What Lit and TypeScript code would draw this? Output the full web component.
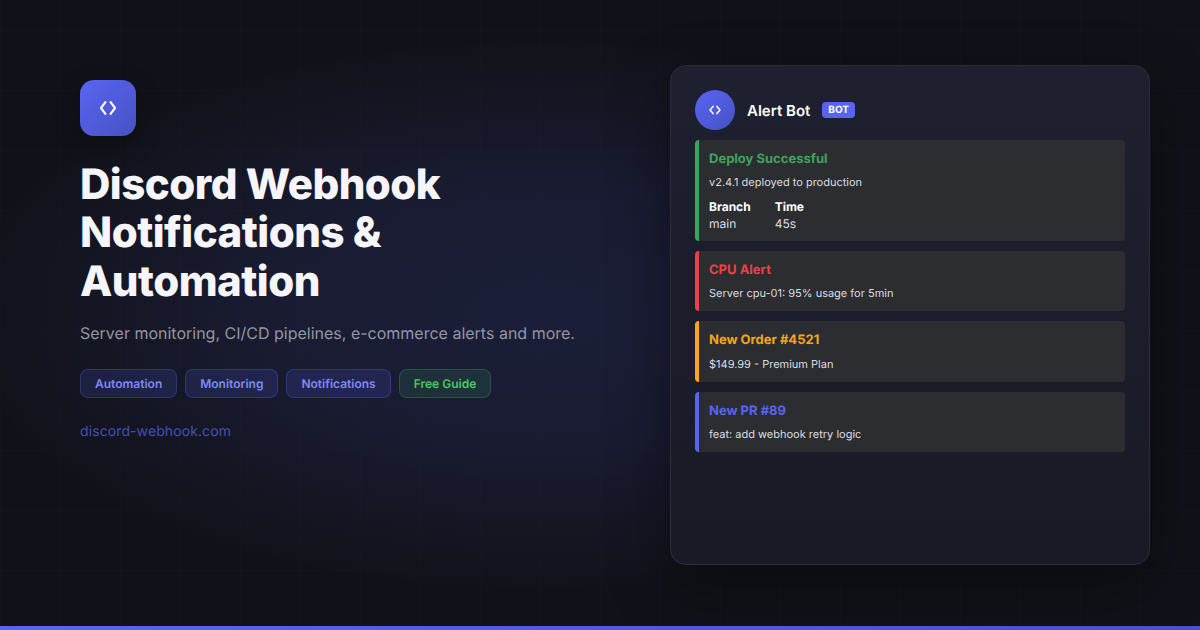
import { LitElement, html, css, svg } from "lit";
import { customElement } from "lit/decorators.js";

const code = (tip: number, end: number, h: number, sw: number) => html`<svg width="24" height="24" viewBox="-12 -12 24 24" fill="none" stroke="#fff" stroke-width=${sw} stroke-linecap="round" stroke-linejoin="round">${svg`<path d="M${-end} ${-h}L${-tip} 0L${-end} ${h}"/><path d="M${end} ${-h}L${tip} 0L${end} ${h}"/>`}</svg>`;

@customElement("app-root")
export class AppRoot extends LitElement {
  static styles = css`
    :host { display: block; width: 1200px; height: 630px; font-family: Inter, "Liberation Sans", sans-serif; color: #fff; overflow: hidden; text-rendering: geometricPrecision; }
    .page { position: relative; box-sizing: border-box; width: 1200px; height: 630px; display: flex; justify-content: space-between; padding: 65px 50px 0 80px;
      background:
        linear-gradient(rgba(88,101,242,.018) 1px, transparent 1px) 0 30px / 60px 60px,
        linear-gradient(90deg, rgba(88,101,242,.018) 1px, transparent 1px) 0 0 / 60px 60px,
        radial-gradient(ellipse at 45% 50%, rgba(88,101,242,.15) 0%, rgba(88,101,242,.11) 30%, rgba(88,101,242,0) 62%),
        #111219; }
    .bar { position: absolute; left: 0; right: 0; bottom: 0; height: 4px; background: linear-gradient(90deg, #5865f2, #4752c4); }
    .left { padding-top: 15px; width: 520px; }
    .logo { width: 56px; height: 56px; border-radius: 14px; background: linear-gradient(135deg, #5865f2, #4752c4); display: flex; align-items: center; justify-content: center; box-shadow: 0 8px 24px rgba(0,0,0,.3); margin-bottom: 25px; }
    h1 { margin: 0 0 14.5px; font-size: 42px; line-height: 48.3px; font-weight: 800; color: #f5f5fa; letter-spacing: -.5px; }
    .sub { font-size: 16px; line-height: 26px; color: #9496a1; margin-bottom: 23px; }
    .tags { display: flex; gap: 8px; margin-bottom: 23.5px; }
    .tag { box-sizing: border-box; height: 29px; padding: 0 14px; display: flex; align-items: center; font-size: 12px; font-weight: 600; border-radius: 8px; background: rgba(88,101,242,.15); border: 1px solid rgba(88,101,242,.3); color: #7f89f7; }
    .tag.green { background: rgba(59,165,93,.15); border-color: rgba(59,165,93,.3); color: #4ac85f; }
    .url { font-size: 14px; line-height: 20px; color: #4650b4; letter-spacing: .1px; }
    .card { box-sizing: border-box; width: 480px; height: 500px; background: linear-gradient(180deg, #1e2030, #1a1a26); border: 1px solid #2c2d3c; border-radius: 16px; padding: 24px; box-shadow: 0 20px 60px rgba(0,0,0,.4); }
    .head { display: flex; align-items: center; margin-bottom: 10px; height: 40px; }
    .avatar { width: 40px; height: 40px; border-radius: 50%; background: linear-gradient(135deg, #5865f2, #4752c4); display: flex; align-items: center; justify-content: center; margin-right: 12px; }
    .name { font-size: 15px; font-weight: 600; margin-right: 12px; }
    .badge { background: #5865f2; border-radius: 4px; font-size: 10px; font-weight: 700; line-height: 16px; padding: 0 6px; }
    .embeds { display: flex; flex-direction: column; gap: 10px; }
    .embed { background: #2b2d31; border-left: 4px solid; border-radius: 4px; padding: 10px; }
    .t { font-size: 13px; font-weight: 700; line-height: 18px; margin-bottom: 6.4px; }
    .d { font-size: 11px; line-height: 16px; color: #dbdee1; }
    .fields { display: flex; gap: 24px; margin: 8.5px 0 -1.5px; font-size: 12px; }
    .fields b { display: block; font-weight: 700; line-height: 16.4px; margin-bottom: 1px; color: #fff; }
    .fields span { display: block; line-height: 16px; color: #dbdee1; }
  `;
  render() {
    return html`<div class="page">
      <div class="left">
        <div class="logo">${code(7, 2.6, 5.8, 2.1)}</div>
        <h1>Discord Webhook<br />Notifications &amp;<br />Automation</h1>
        <div class="sub">Server monitoring, CI/CD pipelines, e-commerce alerts and more.</div>
        <div class="tags">
          <div class="tag">Automation</div><div class="tag">Monitoring</div><div class="tag">Notifications</div><div class="tag green">Free Guide</div>
        </div>
        <div class="url">discord-webhook.com</div>
      </div>
      <div class="card">
        <div class="head"><div class="avatar">${code(5, 1.9, 3.6, 1.5)}</div><div class="name">Alert Bot</div><div class="badge">BOT</div></div>
        <div class="embeds">
          <div class="embed" style="border-color:#3ba55d">
            <div class="t" style="color:#3ba55d">Deploy Successful</div>
            <div class="d">v2.4.1 deployed to production</div>
            <div class="fields"><div><b>Branch</b><span>main</span></div><div><b>Time</b><span>45s</span></div></div>
          </div>
          <div class="embed" style="border-color:#ed4245"><div class="t" style="color:#ed4245">CPU Alert</div><div class="d">Server cpu-01: 95% usage for 5min</div></div>
          <div class="embed" style="border-color:#faa61a"><div class="t" style="color:#faa61a">New Order #4521</div><div class="d">$149.99 - Premium Plan</div></div>
          <div class="embed" style="border-color:#5865f2"><div class="t" style="color:#5865f2">New PR #89</div><div class="d">feat: add webhook retry logic</div></div>
        </div>
      </div>
      <div class="bar"></div>
    </div>`;
  }
}
